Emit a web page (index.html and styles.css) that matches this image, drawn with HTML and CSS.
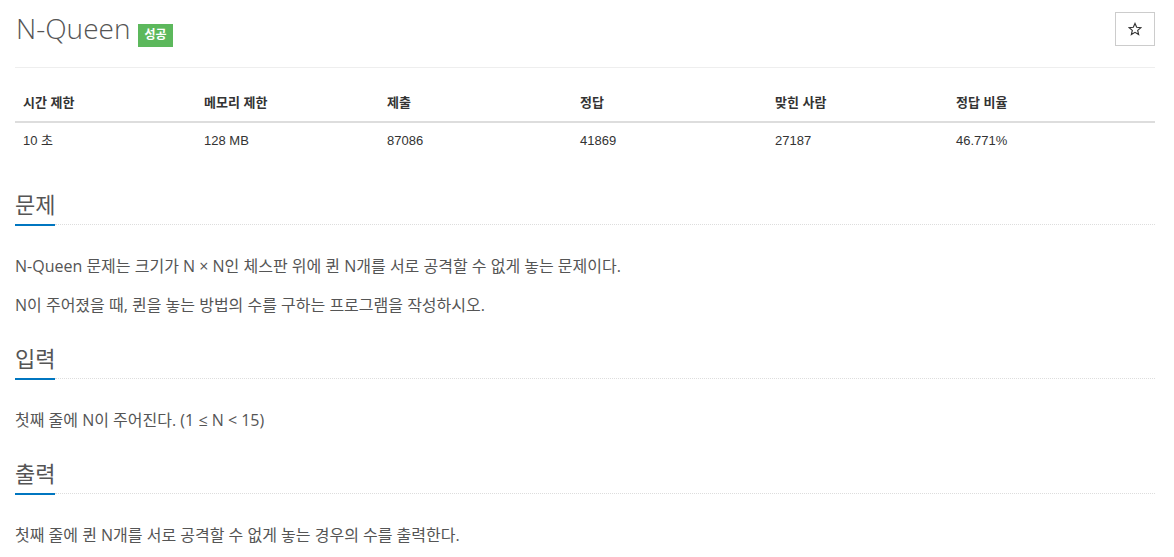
FILE: index.html
```html
<!DOCTYPE html>
<html lang="ko">
<head>
<meta charset="utf-8">
<title>N-Queen</title>
<link rel="stylesheet" href="styles.css">
</head>
<body>
<div class="page">
  <div class="page-header">
    <div class="title-wrap">
      <h1 class="title">N-Queen</h1>
      <span class="badge">성공</span>
    </div>
    <button class="star-btn" type="button" aria-label="즐겨찾기">
      <svg width="14" height="14" viewBox="0 0 24 24" aria-hidden="true"><path d="M12 2.5l2.9 6.6 7.1.6-5.4 4.7 1.6 7-6.2-3.7-6.2 3.7 1.6-7L2 9.7l7.1-.6z" fill="none" stroke="#333" stroke-width="2" stroke-linejoin="miter"/></svg>
    </button>
  </div>
  <hr class="rule">
  <table class="info">
    <colgroup>
      <col class="c1"><col class="c2"><col class="c3"><col class="c4"><col class="c5"><col class="c6">
    </colgroup>
    <thead>
      <tr><th>시간 제한</th><th>메모리 제한</th><th>제출</th><th>정답</th><th>맞힌 사람</th><th>정답 비율</th></tr>
    </thead>
    <tbody>
      <tr><td>10 초</td><td>128 MB</td><td>87086</td><td>41869</td><td>27187</td><td>46.771%</td></tr>
    </tbody>
  </table>

  <section class="section first">
    <div class="headline"><h2 class="headline-title">문제</h2><div class="headline-line"></div></div>
    <div class="text">
      <p>N-Queen 문제는 크기가 N × N인 체스판 위에 퀸 N개를 서로 공격할 수 없게 놓는 문제이다.</p>
      <p>N이 주어졌을 때, 퀸을 놓는 방법의 수를 구하는 프로그램을 작성하시오.</p>
    </div>
  </section>

  <section class="section">
    <div class="headline"><h2 class="headline-title">입력</h2><div class="headline-line"></div></div>
    <div class="text">
      <p>첫째 줄에 N이 주어진다. (1 ≤ N &lt; 15)</p>
    </div>
  </section>

  <section class="section">
    <div class="headline"><h2 class="headline-title">출력</h2><div class="headline-line"></div></div>
    <div class="text">
      <p>첫째 줄에 퀸 N개를 서로 공격할 수 없게 놓는 경우의 수를 출력한다.</p>
    </div>
  </section>
</div>
</body>
</html>
```

FILE: styles.css
```css
html, body {
  margin: 0;
  padding: 0;
  background: #fff;
}

body {
  font-family: "Open Sans", "Noto Sans CJK KR", sans-serif;
  color: #555;
}

.page {
  width: 1140px;
  margin-left: 15px;
}

.page-header {
  display: flex;
  justify-content: space-between;
  align-items: flex-start;
  padding-top: 12px;
}

.title-wrap {
  display: flex;
  align-items: flex-start;
}

.title {
  margin: 0;
  font-size: 28px;
  font-weight: 300;
  line-height: 33px;
  color: #555;
  padding-left: 1px;
}

.badge {
  margin-left: 8px;
  margin-top: 12px;
  background: #5cb85c;
  color: #fff;
  font-family: "Liberation Sans", "Noto Sans CJK KR", sans-serif;
  font-weight: 700;
  font-size: 12px;
  line-height: 23px;
  height: 23px;
  padding: 0 6px;
}

.star-btn {
  width: 40px;
  height: 34px;
  background: #fff;
  border: 1px solid #ccc;
  border-radius: 0;
  padding: 0;
  display: flex;
  align-items: center;
  justify-content: center;
  margin: 0;
}

.rule {
  border: 0;
  border-top: 1px solid #eee;
  margin: 20px 0 0 0;
}

.info {
  width: 100%;
  border-collapse: collapse;
  margin-top: 17px;
  font-family: "Liberation Sans", "Noto Sans CJK KR", sans-serif;
  font-size: 13px;
  color: #333;
}

.info .c1 { width: 181px; }
.info .c2 { width: 183px; }
.info .c3 { width: 193px; }
.info .c4 { width: 195px; }
.info .c5 { width: 181px; }
.info .c6 { width: 207px; }

.info th,
.info td {
  text-align: left;
  padding: 8px;
  line-height: 20px;
}

.info th {
  font-weight: 700;
  border-bottom: 2px solid #ddd;
}

.section {
  margin-top: 26px;
}

.section.first {
  margin-top: 30px;
}

.headline {
  display: flex;
  align-items: flex-end;
}

.headline-title {
  margin: 0;
  font-size: 22px;
  font-weight: 400;
  line-height: 30px;
  padding-bottom: 5px;
  border-bottom: 2px solid #0076c0;
  color: #555;
}

.headline-line {
  flex: 1;
  border-bottom: 1px dotted #ddd;
  margin-bottom: 1px;
}

.text {
  margin-top: 28px;
  font-size: 16px;
  line-height: 24px;
}

.text p {
  margin: 0;
}

.text p + p {
  margin-top: 15px;
}
```
